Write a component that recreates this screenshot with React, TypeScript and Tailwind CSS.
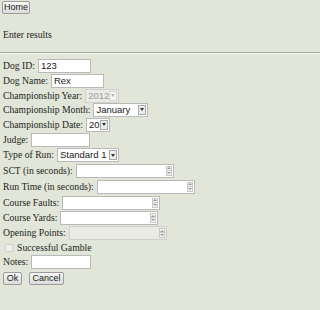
import React from "react";

const serif = "font-['Liberation_Serif','Times_New_Roman',serif]";
const sans = "font-['Liberation_Sans',Arial,sans-serif]";

function Spinner() {
  return (
    <div className="ml-auto mr-[1px] flex h-[10px] w-[6px] flex-col">
      <div className="flex h-[5px] items-center justify-center border border-[#c8c8c8] bg-[#f2f2f2]">
        <svg width="4" height="2" viewBox="0 0 4 2"><path d="M0 2L2 0L4 2Z" fill="#9a9a9a" /></svg>
      </div>
      <div className="flex h-[5px] items-center justify-center border border-t-0 border-[#c8c8c8] bg-[#f2f2f2]">
        <svg width="4" height="2" viewBox="0 0 4 2"><path d="M0 0L4 0L2 2Z" fill="#9a9a9a" /></svg>
      </div>
    </div>
  );
}

function Arrow({ disabled }: { disabled?: boolean }) {
  return (
    <div
      className={
        "ml-auto mr-[1px] flex h-[10px] w-[8px] shrink-0 items-center justify-center border " +
        (disabled ? "border-[#d6d6d6] bg-[#f4f4f4]" : "border-[#a8a8a8] bg-[#ececec]")
      }
    >
      <svg width="4" height="3" viewBox="0 0 4 3">
        <path d="M0 0L4 0L2 3Z" fill={disabled ? "#b8b8b8" : "#333"} />
      </svg>
    </div>
  );
}

function Box({
  className,
  children,
  disabled,
}: {
  className: string;
  children?: React.ReactNode;
  disabled?: boolean;
}) {
  return (
    <div
      className={
        "flex h-[14px] items-center whitespace-nowrap border pl-[2px] text-[9.5px] leading-none " +
        sans +
        " " +
        (disabled
          ? "border-[#d0d0cc] bg-[#e9ebe4] text-[#a0a0a0]"
          : "border-[#b9b9b9] bg-white text-[#222]") +
        " " +
        className
      }
    >
      {children}
    </div>
  );
}

function Btn({ children, className }: { children: React.ReactNode; className: string }) {
  return (
    <div
      className={
        "flex h-[13px] items-center justify-center rounded-[2px] border border-[#9c9c9c] bg-gradient-to-b from-[#f7f7f7] to-[#dcdcdc] text-[9px] leading-none text-[#222] " +
        sans +
        " " +
        className
      }
    >
      {children}
    </div>
  );
}

function Label({ children, className = "" }: { children: React.ReactNode; className?: string }) {
  return <span className={"whitespace-nowrap " + className}>{children}</span>;
}

export default function App() {
  return (
    <div className={"h-[310px] w-full overflow-hidden bg-[#e1e6d8] text-[9.7px] leading-none text-[#1e1e1e] " + serif}>
      <div className="pl-[2px] pt-[1px]">
        <Btn className="w-[28px]">Home</Btn>
      </div>
      <div className="mt-[16px] pl-[3px]">Enter results</div>
      <div className="mt-[12px] h-[2px] border-t border-[#a8ad9e] bg-[#f0f2ec]" />

      <div className="mt-[4px] flex flex-col pl-[3px]">
        <div className="flex h-[16px] items-center">
          <Label>Dog ID:</Label>
          <Box className="ml-[3px] w-[53px]">123</Box>
        </div>
        <div className="flex h-[15px] items-center">
          <Label>Dog Name:</Label>
          <Box className="ml-[3px] w-[53px]">Rex</Box>
        </div>
        <div className="flex h-[14px] items-center">
          <Label>Championship Year:</Label>
          <Box className="ml-[3px] h-[12px] w-[34px]" disabled>
            2012
            <Arrow disabled />
          </Box>
        </div>
        <div className="flex h-[14px] items-center">
          <Label>Championship Month:</Label>
          <Box className="ml-[3px] h-[12px] w-[55px] border-[#a0a0a0]">
            January
            <Arrow />
          </Box>
        </div>
        <div className="flex h-[16px] items-center">
          <Label>Championship Date:</Label>
          <Box className="ml-[3px] h-[12px] w-[24px] border-[#a0a0a0]">
            20
            <Arrow />
          </Box>
        </div>
        <div className="flex h-[15px] items-center">
          <Label>Judge:</Label>
          <Box className="ml-[3px] w-[59px]" />
        </div>
        <div className="flex h-[15px] items-center">
          <Label>Type of Run:</Label>
          <Box className="ml-[3px] h-[12px] w-[62px] border-[#a0a0a0]">
            Standard 1
            <Arrow />
          </Box>
        </div>
        <div className="flex h-[16px] items-center">
          <Label>SCT (in seconds):</Label>
          <Box className="ml-[3px] w-[98px]">
            <Spinner />
          </Box>
        </div>
        <div className="flex h-[16px] items-center">
          <Label>Run Time (in seconds):</Label>
          <Box className="ml-[3px] w-[98px]">
            <Spinner />
          </Box>
        </div>
        <div className="flex h-[16px] items-center">
          <Label>Course Faults:</Label>
          <Box className="ml-[3px] w-[98px]">
            <Spinner />
          </Box>
        </div>
        <div className="flex h-[15px] items-center">
          <Label>Course Yards:</Label>
          <Box className="ml-[3px] w-[98px]">
            <Spinner />
          </Box>
        </div>
        <div className="flex h-[15px] items-center">
          <Label>Opening Points:</Label>
          <Box className="ml-[3px] w-[98px]" disabled>
            <Spinner />
          </Box>
        </div>
        <div className="flex h-[14px] items-center">
          <div className="ml-[2px] h-[8px] w-[8px] border border-[#d2d2d2] bg-[#eeeeee]" />
          <Label className="ml-[4px]">Successful Gamble</Label>
        </div>
        <div className="flex h-[15px] items-center">
          <Label>Notes:</Label>
          <Box className="ml-[3px] w-[60px]" />
        </div>
        <div className="flex h-[17px] items-center">
          <Btn className="w-[19px]">Ok</Btn>
          <Btn className="ml-[7px] w-[35px]">Cancel</Btn>
        </div>
      </div>
    </div>
  );
}
